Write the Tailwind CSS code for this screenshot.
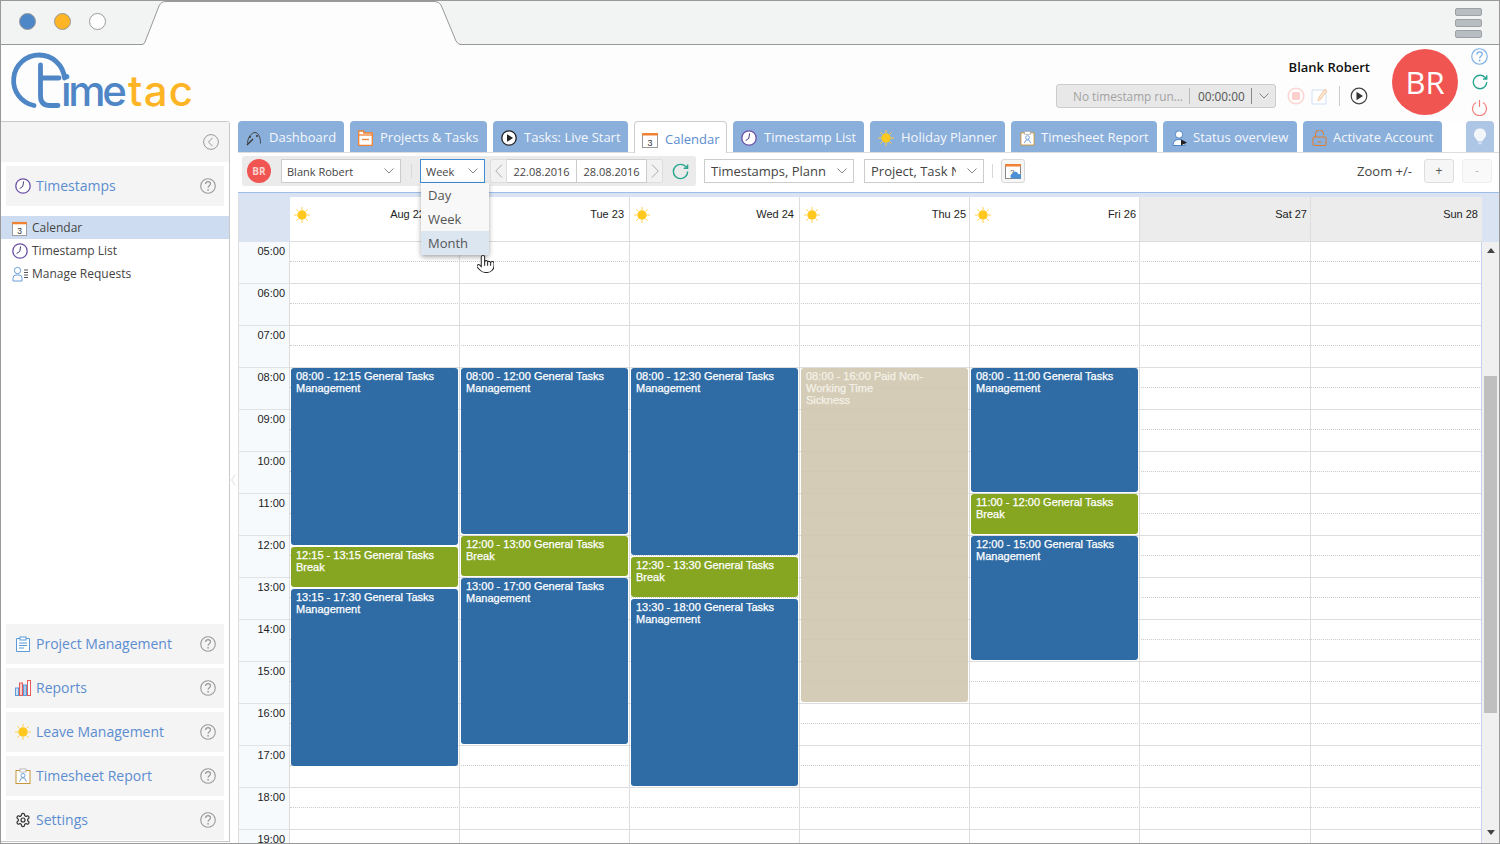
<!DOCTYPE html>
<html lang="en">
<head>
<meta charset="utf-8">
<title>TimeTac Calendar</title>
<script src="https://cdn.jsdelivr.net/npm/@tailwindcss/browser@4"></script>
</head>
<body class="bg-white">
<svg class="hidden">
  <defs>
    <symbol id="sun" viewBox="0 0 16 16"><g stroke="#ffcf3f" stroke-width="1" stroke-linecap="round"><path d="M8 .5v2M8 13.5v2M.5 8h2M13.5 8h2M2.7 2.7l1.4 1.4M11.9 11.9l1.4 1.4M2.7 13.3l1.4-1.4M11.9 4.1l1.4-1.4"/></g><circle cx="8" cy="8" r="4.7" fill="#ffc81f"/></symbol>
    <symbol id="clock" viewBox="0 0 16 16"><circle cx="8" cy="8" r="7.2" fill="#fff" stroke="#6b4fa5" stroke-width="1.3"/><path d="M8.6 3.4 7.8 8.4 4.6 10.6" fill="none" stroke="#4b3a78" stroke-width="1"/></symbol>
    <symbol id="help" viewBox="0 0 16 16"><circle cx="8" cy="8" r="7.3" fill="none" stroke="currentColor" stroke-width="1.1"/><path d="M5.6 6.1c0-1.5 1.1-2.4 2.5-2.4s2.4.9 2.4 2.1c0 1.9-2.4 1.9-2.4 3.9" fill="none" stroke="currentColor" stroke-width="1.200"/><circle cx="8.1" cy="11.8" r=".9" fill="currentColor"/></symbol>
    <symbol id="cal" viewBox="0 0 16 16"><rect x=".5" y="1.5" width="15" height="14" fill="#fff" stroke="#999"/><rect y="1" width="16" height="2.5" fill="#f08233"/><text x="8" y="13.5" text-anchor="middle" font-size="9" font-family="Liberation Sans" fill="#333">3</text></symbol>
    <symbol id="chev" viewBox="0 0 10 6"><path d="M.5.5 5 5 9.5.5" fill="none" stroke="#888" stroke-width="1"/></symbol>
    <symbol id="refresh" viewBox="0 0 24 24"><path d="M21 12a9 9 0 1 1-9-9c2.52 0 4.93 1 6.74 2.74L21 8M21 3v5h-5" fill="none" stroke="#2aa58f" stroke-width="1.8"/></symbol>
    <symbol id="sheet" viewBox="0 0 16 16"><rect x="1" y="2.5" width="14" height="13" fill="#fff" stroke="#c8953c"/><rect x="5" y="1" width="6" height="3" fill="#fff" stroke="#aaa" stroke-width=".8"/><circle cx="8" cy="7.5" r="2" fill="none" stroke="#6d9fd8"/><path d="M4.500 13.500 6.500 10h3l2 3.500" fill="none" stroke="#6d9fd8"/></symbol>
  </defs>
</svg>

<div class="relative w-[1500px] h-[844px] overflow-hidden border-x border-b border-[#999] font-['Open_Sans',sans-serif]">

  <!-- window title bar -->
  <div class="relative h-[45px] bg-[#f2f4f3] border-y border-[#999]">
    <svg class="absolute left-0 top-0" width="480" height="45" viewBox="0 0 480 45"><path d="M141 44 Q143 43.500 144 41 L158 5 Q160 0 165 0 H434 Q438 0 440 4 L455 40 Q457 43.500 460 44 Z" fill="#fdfdfd"/><path d="M136 43.500 H141 Q143 43.500 144 41 L158 5 Q160 .5 165 .5 H434 Q438 .5 440 4 L455 40 Q457 43.500 460 43.500 H465" fill="none" stroke="#999"/></svg>
    <div class="absolute left-[18px] top-[12px] flex gap-[18px]">
      <span class="w-[17px] h-[17px] rounded-full bg-[#4d87c7] border border-[#999]"></span>
      <span class="w-[17px] h-[17px] rounded-full bg-[#fdb525] border border-[#999]"></span>
      <span class="w-[17px] h-[17px] rounded-full bg-white border border-[#999]"></span>
    </div>
    <div class="absolute right-[17px] top-[7px] flex flex-col gap-[3px]">
      <span class="block w-[27px] h-[8px] rounded-[2px] bg-[#b7bdc1] border border-[#9ba1a5]"></span>
      <span class="block w-[27px] h-[8px] rounded-[2px] bg-[#b7bdc1] border border-[#9ba1a5]"></span>
      <span class="block w-[27px] h-[8px] rounded-[2px] bg-[#b7bdc1] border border-[#9ba1a5]"></span>
    </div>
  </div>

  <!-- app header -->
  <div class="flex h-[76px] bg-[#fdfdfd]">
    <svg class="ml-[8px] mt-[6px]" width="190" height="64" viewBox="8 51 190 64">
      <path d="M63.500 78A25.500 25.500 0 1 0 33 105.500" fill="none" stroke="#4f86c6" stroke-width="4.800" stroke-linecap="round"/>
      <path d="M39.500 65V96Q39.500 105.500 49 105.500H57M39.500 78H58" fill="none" stroke="#4f86c6" stroke-width="4.800" stroke-linecap="round"/>
      <text x="60" y="106" font-family="Inter" font-size="42" font-weight="500" fill="#4f86c6" textLength="66" lengthAdjust="spacing">ime</text>
      <text x="127" y="106" font-family="Inter" font-size="42" font-weight="500" fill="#fdb525" textLength="65" lengthAdjust="spacing">tac</text>
    </svg>
    <div class="ml-auto flex flex-col items-end mr-[131px]">
      <div class="mt-[14px] -mr-[2px] text-[13px] leading-[17px] font-semibold text-[#111]">Blank Robert</div>
      <div class="flex items-center mt-[7px] h-[26px]">
        <div class="flex items-center w-[220px] h-[24px] bg-[#e8e8e8] border border-[#ccc] rounded-[3px] text-[11.800px]">
          <span class="w-[133px] pl-[16px] text-[#a3a3a3] whitespace-nowrap border-r border-[#bbb] leading-[16px]">No timestamp run...</span>
          <span class="w-[62px] pl-[8px] text-[#555] border-r border-[#888] leading-[16px]">00:00:00</span>
          <svg class="ml-[7px]" width="10" height="6"><use href="#chev"/></svg>
        </div>
        <svg class="ml-[11px]" width="18" height="18" viewBox="0 0 18 18"><circle cx="9" cy="9" r="7.800" fill="#fff" stroke="#fbd5d0" stroke-width="1.500"/><rect x="5" y="5" width="8" height="8" rx="1" fill="#fbd0ca"/></svg>
        <svg class="ml-[5px]" width="18" height="18" viewBox="0 0 18 18"><path d="M2 3h9l5 0v14H2z" fill="#fff" stroke="#cfe1f4"/><path d="M8 14l1-4 6-8 2 2-6 8z" fill="#fbe6d2" stroke="#f4c9a5"/></svg>
        <span class="ml-[11px] w-px h-[20px] bg-[#ccc]"></span>
        <svg class="ml-[10px]" width="18" height="18" viewBox="0 0 18 18"><circle cx="9" cy="9" r="7.800" fill="#fff" stroke="#444" stroke-width="1.200"/><path d="M6.500 4.800 13 9l-6.500 4.200z" fill="#333"/></svg>
      </div>
    </div>
    <div class="absolute left-[1391px] top-[49px] w-[66px] h-[66px] rounded-full bg-[#f05552] flex items-center justify-center text-white text-[31px] font-['Open_Sans']">BR</div>
    <div class="absolute left-[1470px] top-[48px] flex flex-col gap-[8px] text-[#7fb0e6]">
      <svg width="17" height="17"><use href="#help"/></svg>
      <svg width="18" height="18"><use href="#refresh"/></svg>
      <svg width="17" height="17" viewBox="0 0 17 17"><path d="M5 3.500a7 7 0 1 0 7 0M8.500 1v7" fill="none" stroke="#f0807c" stroke-width="1.200"/></svg>
    </div>
  </div>

  <div class="flex h-[723px]">
    <!-- sidebar -->
    <aside class="relative w-[229px] h-[721px] border-t border-r border-b border-[#c8c8c8] rounded-tr-[3px] bg-white flex flex-col shrink-0">
      <div class="h-[40px] bg-[#f4f4f4] flex items-center justify-end pr-[10px]">
        <svg width="16" height="16" viewBox="0 0 16 16"><circle cx="8" cy="8" r="7.400" fill="none" stroke="#999"/><path d="M9.500 3.800 5.500 8l4 4.200" fill="none" stroke="#999"/></svg>
      </div>
      <div class="mt-[4px] mx-[5px] h-[40px] bg-[#f4f4f4] flex items-center pl-[9px] pr-[8px] text-[14px] text-[#5b8dd0]">
        <svg width="16" height="16"><use href="#clock"/></svg><span class="ml-[5px] mb-[2px]">Timestamps</span>
        <svg class="ml-auto text-[#999]" width="16" height="16"><use href="#help"/></svg>
      </div>
      <div class="mt-[10px] text-[12px] text-[#444]">
        <div class="h-[23px] bg-[#cddcf0] flex items-center pl-[11px] pt-[1px]"><svg class="mr-[5px]" width="15" height="15"><use href="#cal"/></svg>Calendar</div>
        <div class="h-[23px] flex items-center pl-[11px] pt-[1px]"><svg class="mr-[4px]" width="16" height="16"><use href="#clock"/></svg>Timestamp List</div>
        <div class="h-[23px] flex items-center pl-[11px] pt-[1px]"><svg class="mr-[4px]" width="16" height="16" viewBox="0 0 16 16"><circle cx="5.500" cy="4.500" r="3.200" fill="none" stroke="#6d9fd8"/><path d="M1 15v-3q0-3 3-3h3q3 0 3 3v3z" fill="none" stroke="#6d9fd8"/><path d="M12 4h4M12 6.500h4M12 9h4M12 11.500h4" stroke="#555"/></svg>Manage Requests</div>
      </div>
      <div class="mt-auto mb-[1px] flex flex-col gap-[4px] mx-[5px] text-[14px] text-[#5b8dd0]">
        <div class="h-[40px] bg-[#f4f4f4] flex items-center pl-[9px] pr-[8px]">
          <svg width="16" height="16" viewBox="0 0 16 16"><path d="M1.500 2.500h13v13h-13z" fill="#fff" stroke="#5b9ad8"/><rect x="5" y="1" width="6" height="3" fill="#fff" stroke="#5b9ad8"/><path d="M4 7h8M4 9.500h8M4 12h5" stroke="#5b9ad8"/></svg>
          <span class="ml-[5px] mb-[2px]">Project Management</span><svg class="ml-auto text-[#999]" width="16" height="16"><use href="#help"/></svg>
        </div>
        <div class="h-[40px] bg-[#f4f4f4] flex items-center pl-[9px] pr-[8px]">
          <svg width="16" height="16" viewBox="0 0 16 16"><rect x=".5" y="8" width="3" height="7.500" fill="#cfe2f5" stroke="#5b9ad8"/><rect x="4.500" y="3" width="3" height="12.500" fill="#fcc" stroke="#e75a5a"/><rect x="8.500" y="5" width="3" height="10.500" fill="#a9cbe9" stroke="#5b9ad8"/><rect x="12.500" y=".5" width="3" height="15" fill="#fff" stroke="#e75a5a"/></svg>
          <span class="ml-[5px] mb-[2px]">Reports</span><svg class="ml-auto text-[#999]" width="16" height="16"><use href="#help"/></svg>
        </div>
        <div class="h-[40px] bg-[#f4f4f4] flex items-center pl-[9px] pr-[8px]">
          <svg width="16" height="16"><use href="#sun"/></svg>
          <span class="ml-[5px] mb-[2px]">Leave Management</span><svg class="ml-auto text-[#999]" width="16" height="16"><use href="#help"/></svg>
        </div>
        <div class="h-[40px] bg-[#f4f4f4] flex items-center pl-[9px] pr-[8px]">
          <svg width="16" height="16"><use href="#sheet"/></svg>
          <span class="ml-[5px] mb-[2px]">Timesheet Report</span><svg class="ml-auto text-[#999]" width="16" height="16"><use href="#help"/></svg>
        </div>
        <div class="h-[40px] bg-[#f4f4f4] flex items-center pl-[9px] pr-[8px]">
          <svg width="16" height="16" viewBox="0 0 24 24" fill="none" stroke="#333" stroke-width="1.800"><path d="M12.220 2h-.44a2 2 0 0 0-2 2v.18a2 2 0 0 1-1 1.730l-.43.250a2 2 0 0 1-2 0l-.15-.08a2 2 0 0 0-2.730.730l-.22.380a2 2 0 0 0 .730 2.730l.150.100a2 2 0 0 1 1 1.720v.510a2 2 0 0 1-1 1.740l-.15.090a2 2 0 0 0-.730 2.730l.220.380a2 2 0 0 0 2.730.730l.150-.08a2 2 0 0 1 2 0l.430.250a2 2 0 0 1 1 1.730V20a2 2 0 0 0 2 2h.440a2 2 0 0 0 2-2v-.18a2 2 0 0 1 1-1.730l.430-.25a2 2 0 0 1 2 0l.150.080a2 2 0 0 0 2.730-.730l.220-.39a2 2 0 0 0-.730-2.730l-.15-.08a2 2 0 0 1-1-1.740v-.5a2 2 0 0 1 1-1.740l.150-.09a2 2 0 0 0 .730-2.730l-.22-.38a2 2 0 0 0-2.730-.730l-.15.080a2 2 0 0 1-2 0l-.43-.25a2 2 0 0 1-1-1.730V4a2 2 0 0 0-2-2z"/><circle cx="12" cy="12" r="3"/></svg>
          <span class="ml-[5px] mb-[2px]">Settings</span><svg class="ml-auto text-[#999]" width="16" height="16"><use href="#help"/></svg>
        </div>
      </div>
    </aside>

    <!-- main -->
    <main class="relative flex-1 ml-[8px] min-w-0">
      <svg class="absolute -left-[7px] top-[353px]" width="5" height="12" viewBox="0 0 5 12"><path d="M4.500.5.500 6l4 5.500" fill="none" stroke="#ddd"/></svg>
      <!-- tabs -->
      <div class="flex items-end gap-[6px] h-[32px] text-[13px] text-[#f4f7fb] border-b border-[#ddd] whitespace-nowrap">
        <div class="w-[106px] h-[31px] bg-[#8aafdb] rounded-t-[4px] flex items-center pl-[8px] pt-[3px]">
          <svg class="mr-[7px]" width="16" height="16" viewBox="0 0 16 16" fill="none" stroke="#444"><path d="M1.500 13.500C1.500 7 6 2.500 9 2.500c3.500 0 5.500 5 5.500 11"/><path d="M1 15l6-6" stroke="#333" stroke-width="1.300"/><circle cx="4" cy="7" r=".7" fill="#333"/><circle cx="11" cy="6" r=".7" fill="#333"/></svg>Dashboard</div>
        <div class="w-[137px] h-[31px] bg-[#8aafdb] rounded-t-[4px] flex items-center pl-[8px] pt-[3px]">
          <svg class="mr-[7px]" width="15" height="16" viewBox="0 0 15 16"><path d="M.7 15.300V1h5v2h8.600v12.300z" fill="#fff" stroke="#f08233" stroke-width="1.300"/><path d="M.7 5h13.600" stroke="#f08233" stroke-width="1.300"/><path d="M4 9.500h7" stroke="#f08233" stroke-width="1.300"/></svg>Projects &amp; Tasks</div>
        <div class="w-[135px] h-[31px] bg-[#8aafdb] rounded-t-[4px] flex items-center pl-[8px] pt-[3px]">
          <svg class="mr-[7px]" width="16" height="16" viewBox="0 0 16 16"><circle cx="8" cy="8" r="7.200" fill="#fff" stroke="#222" stroke-width="1.300"/><path d="M6 4.200 12 8l-6 3.800z" fill="#222"/></svg>Tasks: Live Start</div>
        <div class="w-[93px] h-[32px] -mb-px bg-white border border-b-0 border-[#ccc] rounded-t-[4px] flex items-center pl-[7px] pt-[5px] text-[#5b8dd0]">
          <svg class="mr-[7px]" width="16" height="16"><use href="#cal"/></svg>Calendar</div>
        <div class="w-[131px] h-[31px] bg-[#8aafdb] rounded-t-[4px] flex items-center pl-[8px] pt-[3px]">
          <svg class="mr-[7px]" width="16" height="16"><use href="#clock"/></svg>Timestamp List</div>
        <div class="w-[135px] h-[31px] bg-[#8aafdb] rounded-t-[4px] flex items-center pl-[8px] pt-[3px]">
          <svg class="mr-[7px]" width="16" height="16"><use href="#sun"/></svg>Holiday Planner</div>
        <div class="w-[146px] h-[31px] bg-[#8aafdb] rounded-t-[4px] flex items-center pl-[9px] pt-[3px]">
          <svg class="mr-[6px]" width="15" height="16"><use href="#sheet"/></svg>Timesheet Report</div>
        <div class="w-[134px] h-[31px] bg-[#8aafdb] rounded-t-[4px] flex items-center pl-[9px] pt-[3px]">
          <svg class="mr-[5px]" width="16" height="16" viewBox="0 0 16 16"><circle cx="7" cy="4.500" r="3.700" fill="#fff" stroke="#4f86c6"/><path d="M1 15.500q0-6 6-6t6 6z" fill="#fff" stroke="#4f86c6"/><path d="M9 9.500l6 3-6 3z" fill="#222"/></svg>Status overview</div>
        <div class="w-[139px] h-[31px] bg-[#8aafdb] rounded-t-[4px] flex items-center pl-[9px] pt-[3px]">
          <svg class="mr-[6px]" width="15" height="16" viewBox="0 0 15 16" fill="none" stroke="#e07b2a"><rect x="1" y="7" width="13" height="8.500" rx="1"/><path d="M3.500 7V4a4 4 0 0 1 8 0v1"/><path d="M5.500 12h4"/></svg>Activate Account</div>
        <div class="ml-[18px] w-[28px] h-[31px] bg-[#adc6e6] rounded-t-[4px] flex items-center justify-center">
          <svg width="14" height="17" viewBox="0 0 14 17"><path d="M7 .5a6 6 0 0 0-3.500 10.900c.6.5.9 1 .9 1.600h5.200c0-.6.3-1.100.9-1.600A6 6 0 0 0 7 .5z" fill="#f2f6fb"/><path d="M4.800 14h4.400M5.500 15.700h3" stroke="#dfe8f3" stroke-width="1.200"/></svg>
        </div>
      </div>

      <!-- toolbar -->
      <div class="flex items-start h-[39px] pt-[3px] relative text-[#444]">
        <div class="flex items-center ml-[4px] w-[454px] h-[30px] bg-[#ebebeb] rounded-[3px] shrink-0 text-[11px]">
          <span class="ml-[5px] w-[24px] h-[24px] rounded-full bg-[#f05552] flex items-center justify-center text-[10px] font-bold text-[#fbd2d0]">BR</span>
          <div class="ml-[10px] w-[120px] h-[24px] bg-white border border-[#ccc] flex items-center justify-between pl-[5px] pr-[6px] pt-[2px]"><span>Blank Robert</span><svg class="-mt-[2px]" width="10" height="6"><use href="#chev"/></svg></div>
          <span class="ml-[10px] w-px h-[14px] bg-[#d8d8d8]"></span>
          <div class="ml-[8px] w-[65px] h-[24px] bg-white border border-[#3f8ed4] flex items-center justify-between px-[5px] pt-[2px]"><span>Week</span><svg class="mr-[1px] -mt-[2px]" width="10" height="6"><use href="#chev"/></svg></div>
          <div class="ml-[5px] flex h-[24px]">
            <span class="w-[17px] bg-[#f2f2f2] border border-[#ddd] rounded-l-[3px] flex items-center justify-center"><svg width="8" height="14" viewBox="0 0 8 14"><path d="M7 .5.800 7 7 13.500" fill="none" stroke="#aaa"/></svg></span>
            <span class="w-[70px] bg-white border-y border-r border-[#ccc] flex items-center justify-center pt-[2px]">22.08.2016</span>
            <span class="w-[70px] bg-white border-y border-r border-[#ccc] flex items-center justify-center pt-[2px]">28.08.2016</span>
            <span class="w-[16px] bg-[#f2f2f2] border-y border-r border-[#ddd] rounded-r-[3px] flex items-center justify-center"><svg width="8" height="14" viewBox="0 0 8 14"><path d="M1 .5 7.200 7 1 13.500" fill="none" stroke="#aaa"/></svg></span>
          </div>
          <svg class="ml-[8px]" width="19" height="19"><use href="#refresh"/></svg>
        </div>
        <div class="flex items-center flex-1 h-[30px]">
          <div class="ml-[8px] w-[150px] h-[24px] bg-white border border-[#ccc] flex items-center justify-between pl-[6px] pr-[6px] pt-[2px] text-[13px] shrink-0"><span class="w-[116px] overflow-hidden whitespace-nowrap">Timestamps, Plann</span><svg class="-mt-[2px]" width="10" height="6"><use href="#chev"/></svg></div>
          <div class="ml-[10px] w-[120px] h-[24px] bg-white border border-[#ccc] flex items-center justify-between pl-[6px] pr-[6px] pt-[2px] text-[13px] shrink-0"><span class="w-[85px] overflow-hidden whitespace-nowrap">Project, Task Name</span><svg class="-mt-[2px]" width="10" height="6"><use href="#chev"/></svg></div>
          <span class="ml-[8px] w-px h-[14px] bg-[#d8d8d8]"></span>
          <div class="ml-[8px] w-[24px] h-[24px] bg-[#f6f6f6] border border-[#d8d8d8] rounded-[3px] flex items-center justify-center">
            <svg width="16" height="16" viewBox="0 0 16 16"><rect x=".5" y="1.500" width="15" height="14" fill="#fff" stroke="#888"/><rect y="1" width="16" height="2.500" fill="#f08233"/><text x="5" y="12" font-size="8" font-family="Liberation Sans" fill="#333">?</text><path d="M7 15.500a2.500 2.500 0 0 1 .5-4.800 3.200 3.200 0 0 1 6 .5 2.300 2.300 0 0 1 2 4.300z" fill="#4a90d6"/></svg>
          </div>
          <span class="ml-auto text-[13px] text-[#444] pt-[1px]">Zoom +/-</span>
          <span class="ml-[12px] w-[30px] h-[24px] bg-[#f6f6f6] border border-[#ddd] rounded-[3px] flex items-center justify-center text-[12px] text-[#555]">+</span>
          <span class="ml-[8px] mr-[7px] w-[30px] h-[24px] bg-[#f9f9f9] border border-[#eee] rounded-[3px] flex items-center justify-center text-[12px] text-[#bbb]">-</span>
        </div>
      </div>

      <!-- calendar -->
      <div class="border-t border-[#9dbde8] bg-[#d9e3f1] font-['Liberation_Sans',sans-serif] text-[11px] leading-[12px] text-[#222] h-[651px] overflow-hidden">
        <div class="flex h-[49px] pt-[4px]">
          <div class="w-[52px] shrink-0 border-l border-[#ddd]"></div>
          <div class="w-[170px] bg-white border-r border-b border-[#ddd] flex items-start justify-between pt-[10px] pl-[4px] pr-[5px]"><svg width="16" height="16"><use href="#sun"/></svg><span class="mt-[1px] mr-[29px]">Aug 22</span></div>
          <div class="w-[170px] bg-white border-r border-b border-[#ddd] flex items-start justify-end pt-[10px] pl-[4px] pr-[5px]"><span class="mt-[1px]">Tue 23</span></div>
          <div class="w-[170px] bg-white border-r border-b border-[#ddd] flex items-start justify-between pt-[10px] pl-[4px] pr-[5px]"><svg width="16" height="16"><use href="#sun"/></svg><span class="mt-[1px]">Wed 24</span></div>
          <div class="w-[170px] bg-white border-r border-b border-[#ddd] flex items-start justify-between pt-[10px] pl-[4px] pr-[3px]"><svg width="16" height="16"><use href="#sun"/></svg><span class="mt-[1px]">Thu 25</span></div>
          <div class="w-[170px] bg-white border-r border-b border-[#ddd] flex items-start justify-between pt-[10px] pl-[5px] pr-[3px]"><svg width="16" height="16"><use href="#sun"/></svg><span class="mt-[1px]">Fri 26</span></div>
          <div class="w-[171px] bg-[#ececec] border-r border-b border-[#ddd] flex items-start justify-end pt-[10px] px-[3px]"><span class="mt-[1px]">Sat 27</span></div>
          <div class="w-[171px] bg-[#ececec] border-b border-[#ddd] flex items-start justify-end pt-[10px] pr-[4px]"><span class="mt-[1px]">Sun 28</span></div>
        </div>
        <div class="flex bg-white">
          <div class="relative flex w-[1244px] shrink-0">
            <!-- hour grid lines -->
            <div class="absolute inset-y-0 left-[52px] right-0">
              <div class="h-[42px] border-b border-[#ddd]"><div class="h-[20px] border-b border-dotted border-[#ccc]"></div></div>
              <div class="h-[42px] border-b border-[#ddd]"><div class="h-[20px] border-b border-dotted border-[#ccc]"></div></div>
              <div class="h-[42px] border-b border-[#ddd]"><div class="h-[20px] border-b border-dotted border-[#ccc]"></div></div>
              <div class="h-[42px] border-b border-[#ddd]"><div class="h-[20px] border-b border-dotted border-[#ccc]"></div></div>
              <div class="h-[42px] border-b border-[#ddd]"><div class="h-[20px] border-b border-dotted border-[#ccc]"></div></div>
              <div class="h-[42px] border-b border-[#ddd]"><div class="h-[20px] border-b border-dotted border-[#ccc]"></div></div>
              <div class="h-[42px] border-b border-[#ddd]"><div class="h-[20px] border-b border-dotted border-[#ccc]"></div></div>
              <div class="h-[42px] border-b border-[#ddd]"><div class="h-[20px] border-b border-dotted border-[#ccc]"></div></div>
              <div class="h-[42px] border-b border-[#ddd]"><div class="h-[20px] border-b border-dotted border-[#ccc]"></div></div>
              <div class="h-[42px] border-b border-[#ddd]"><div class="h-[20px] border-b border-dotted border-[#ccc]"></div></div>
              <div class="h-[42px] border-b border-[#ddd]"><div class="h-[20px] border-b border-dotted border-[#ccc]"></div></div>
              <div class="h-[42px] border-b border-[#ddd]"><div class="h-[20px] border-b border-dotted border-[#ccc]"></div></div>
              <div class="h-[42px] border-b border-[#ddd]"><div class="h-[20px] border-b border-dotted border-[#ccc]"></div></div>
              <div class="h-[42px] border-b border-[#ddd]"><div class="h-[20px] border-b border-dotted border-[#ccc]"></div></div>
              <div class="h-[42px] border-b border-[#ddd]"><div class="h-[20px] border-b border-dotted border-[#ccc]"></div></div>
            </div>
            <!-- time column -->
            <div class="relative w-[52px] shrink-0 bg-[#f6fafd] border-x border-[#ddd] text-right">
              <div class="h-[42px] border-b border-[#e2e2e2] pt-[3px] pr-[4px]">05:00</div>
              <div class="h-[42px] border-b border-[#e2e2e2] pt-[3px] pr-[4px]">06:00</div>
              <div class="h-[42px] border-b border-[#e2e2e2] pt-[3px] pr-[4px]">07:00</div>
              <div class="h-[42px] border-b border-[#e2e2e2] pt-[3px] pr-[4px]">08:00</div>
              <div class="h-[42px] border-b border-[#e2e2e2] pt-[3px] pr-[4px]">09:00</div>
              <div class="h-[42px] border-b border-[#e2e2e2] pt-[3px] pr-[4px]">10:00</div>
              <div class="h-[42px] border-b border-[#e2e2e2] pt-[3px] pr-[4px]">11:00</div>
              <div class="h-[42px] border-b border-[#e2e2e2] pt-[3px] pr-[4px]">12:00</div>
              <div class="h-[42px] border-b border-[#e2e2e2] pt-[3px] pr-[4px]">13:00</div>
              <div class="h-[42px] border-b border-[#e2e2e2] pt-[3px] pr-[4px]">14:00</div>
              <div class="h-[42px] border-b border-[#e2e2e2] pt-[3px] pr-[4px]">15:00</div>
              <div class="h-[42px] border-b border-[#e2e2e2] pt-[3px] pr-[4px]">16:00</div>
              <div class="h-[42px] border-b border-[#e2e2e2] pt-[3px] pr-[4px]">17:00</div>
              <div class="h-[42px] border-b border-[#e2e2e2] pt-[3px] pr-[4px]">18:00</div>
              <div class="h-[42px] border-b border-[#e2e2e2] pt-[3px] pr-[4px]">19:00</div>
            </div>
            <!-- Mon -->
            <div class="relative w-[170px] border-r border-[#ddd] flex flex-col gap-[2px] pt-[126px] pl-px pr-px text-white [-webkit-text-stroke:0.25px_#fff]">
              <div class="h-[177px] bg-[#2f6ca6] rounded-[3px] pt-[2px] px-[5px]">08:00 - 12:15 General Tasks<br>Management</div>
              <div class="h-[40px] bg-[#86a622] rounded-[3px] pt-[2px] px-[5px]">12:15 - 13:15 General Tasks<br>Break</div>
              <div class="h-[177px] bg-[#2f6ca6] rounded-[3px] pt-[2px] px-[5px]">13:15 - 17:30 General Tasks<br>Management</div>
            </div>
            <!-- Tue -->
            <div class="relative w-[170px] border-r border-[#ddd] flex flex-col gap-[2px] pt-[126px] pl-px pr-px text-white [-webkit-text-stroke:0.25px_#fff]">
              <div class="h-[166px] bg-[#2f6ca6] rounded-[3px] pt-[2px] px-[5px]">08:00 - 12:00 General Tasks<br>Management</div>
              <div class="h-[40px] bg-[#86a622] rounded-[3px] pt-[2px] px-[5px]">12:00 - 13:00 General Tasks<br>Break</div>
              <div class="h-[166px] bg-[#2f6ca6] rounded-[3px] pt-[2px] px-[5px]">13:00 - 17:00 General Tasks<br>Management</div>
            </div>
            <!-- Wed -->
            <div class="relative w-[170px] border-r border-[#ddd] flex flex-col gap-[2px] pt-[126px] pl-px pr-px text-white [-webkit-text-stroke:0.25px_#fff]">
              <div class="h-[187px] bg-[#2f6ca6] rounded-[3px] pt-[2px] px-[5px]">08:00 - 12:30 General Tasks<br>Management</div>
              <div class="h-[40px] bg-[#86a622] rounded-[3px] pt-[2px] px-[5px]">12:30 - 13:30 General Tasks<br>Break</div>
              <div class="h-[187px] bg-[#2f6ca6] rounded-[3px] pt-[2px] px-[5px]">13:30 - 18:00 General Tasks<br>Management</div>
            </div>
            <!-- Thu -->
            <div class="relative w-[170px] border-r border-[#ddd] flex flex-col pt-[126px] pl-px pr-px text-[#f4f1e8] [-webkit-text-stroke:0.25px_#f4f1e8]">
              <div class="h-[334px] bg-[#cfc7ae]/90 rounded-[3px] pt-[2px] px-[5px]">08:00 - 16:00 Paid Non-<br>Working Time<br>Sickness</div>
            </div>
            <!-- Fri -->
            <div class="relative w-[170px] border-r border-[#ddd] flex flex-col gap-[2px] pt-[126px] pl-px pr-px text-white [-webkit-text-stroke:0.25px_#fff]">
              <div class="h-[124px] bg-[#2f6ca6] rounded-[3px] pt-[2px] px-[5px]">08:00 - 11:00 General Tasks<br>Management</div>
              <div class="h-[40px] bg-[#86a622] rounded-[3px] pt-[2px] px-[5px]">11:00 - 12:00 General Tasks<br>Break</div>
              <div class="h-[124px] bg-[#2f6ca6] rounded-[3px] pt-[2px] px-[5px]">12:00 - 15:00 General Tasks<br>Management</div>
            </div>
            <!-- Sat / Sun -->
            <div class="relative w-[171px] border-r border-[#ddd]"></div>
            <div class="relative w-[171px] border-r border-[#c5d3f0]"></div>
          </div>
          <!-- scrollbar -->
          <div class="flex-1 relative bg-[#f0f0f0] -mt-[49px] flex flex-col">
            <div class="h-[49px] bg-[#d9e3f1] shrink-0"></div>
            <div class="h-[134px] shrink-0 pt-[6px] flex justify-center"><svg width="8" height="5" viewBox="0 0 8 5"><path d="M4 0l4 5H0z" fill="#444"/></svg></div>
            <div class="h-[337px] mx-[2px] bg-[#bfbfbf] shrink-0"></div>
            <div class="mt-[117px] flex justify-center"><svg width="8" height="5" viewBox="0 0 8 5"><path d="M4 5 8 0H0z" fill="#444"/></svg></div>
          </div>
        </div>
      </div>

      <!-- view dropdown -->
      <div class="absolute left-[183px] top-[62px] w-[68px] h-[72px] bg-[#f8f8f8] rounded-b-[2px] shadow-[0_2px_5px_rgba(0,0,0,.35)] text-[13px] leading-[24px] text-[#555]">
        <div class="pl-[7px] h-[24px]">Day</div>
        <div class="pl-[7px] h-[24px]">Week</div>
        <div class="pl-[7px] h-[24px] bg-[#dce6f1]">Month</div>
      </div>
      <svg class="absolute left-[239px] top-[131px]" width="17" height="24" viewBox="2 1 20 22" fill="#fff" stroke="#222" stroke-width="1.200"><path d="M18 11a2 2 0 1 1 4 0v3a8 8 0 0 1-8 8h-2c-2.800 0-4.500-.86-5.990-2.340l-3.600-3.600a2 2 0 0 1 2.830-2.820L7 15V4a2 2 0 0 1 4 0v5.500"/><path d="M11 9a2 2 0 0 1 3.500 0M14.500 9.500a2 2 0 0 1 3.500 1.500M11 9.500V14M14.500 9.500V14M18 11v3" fill="none"/></svg>
    </main>
  </div>
</div>
</body>
</html>
